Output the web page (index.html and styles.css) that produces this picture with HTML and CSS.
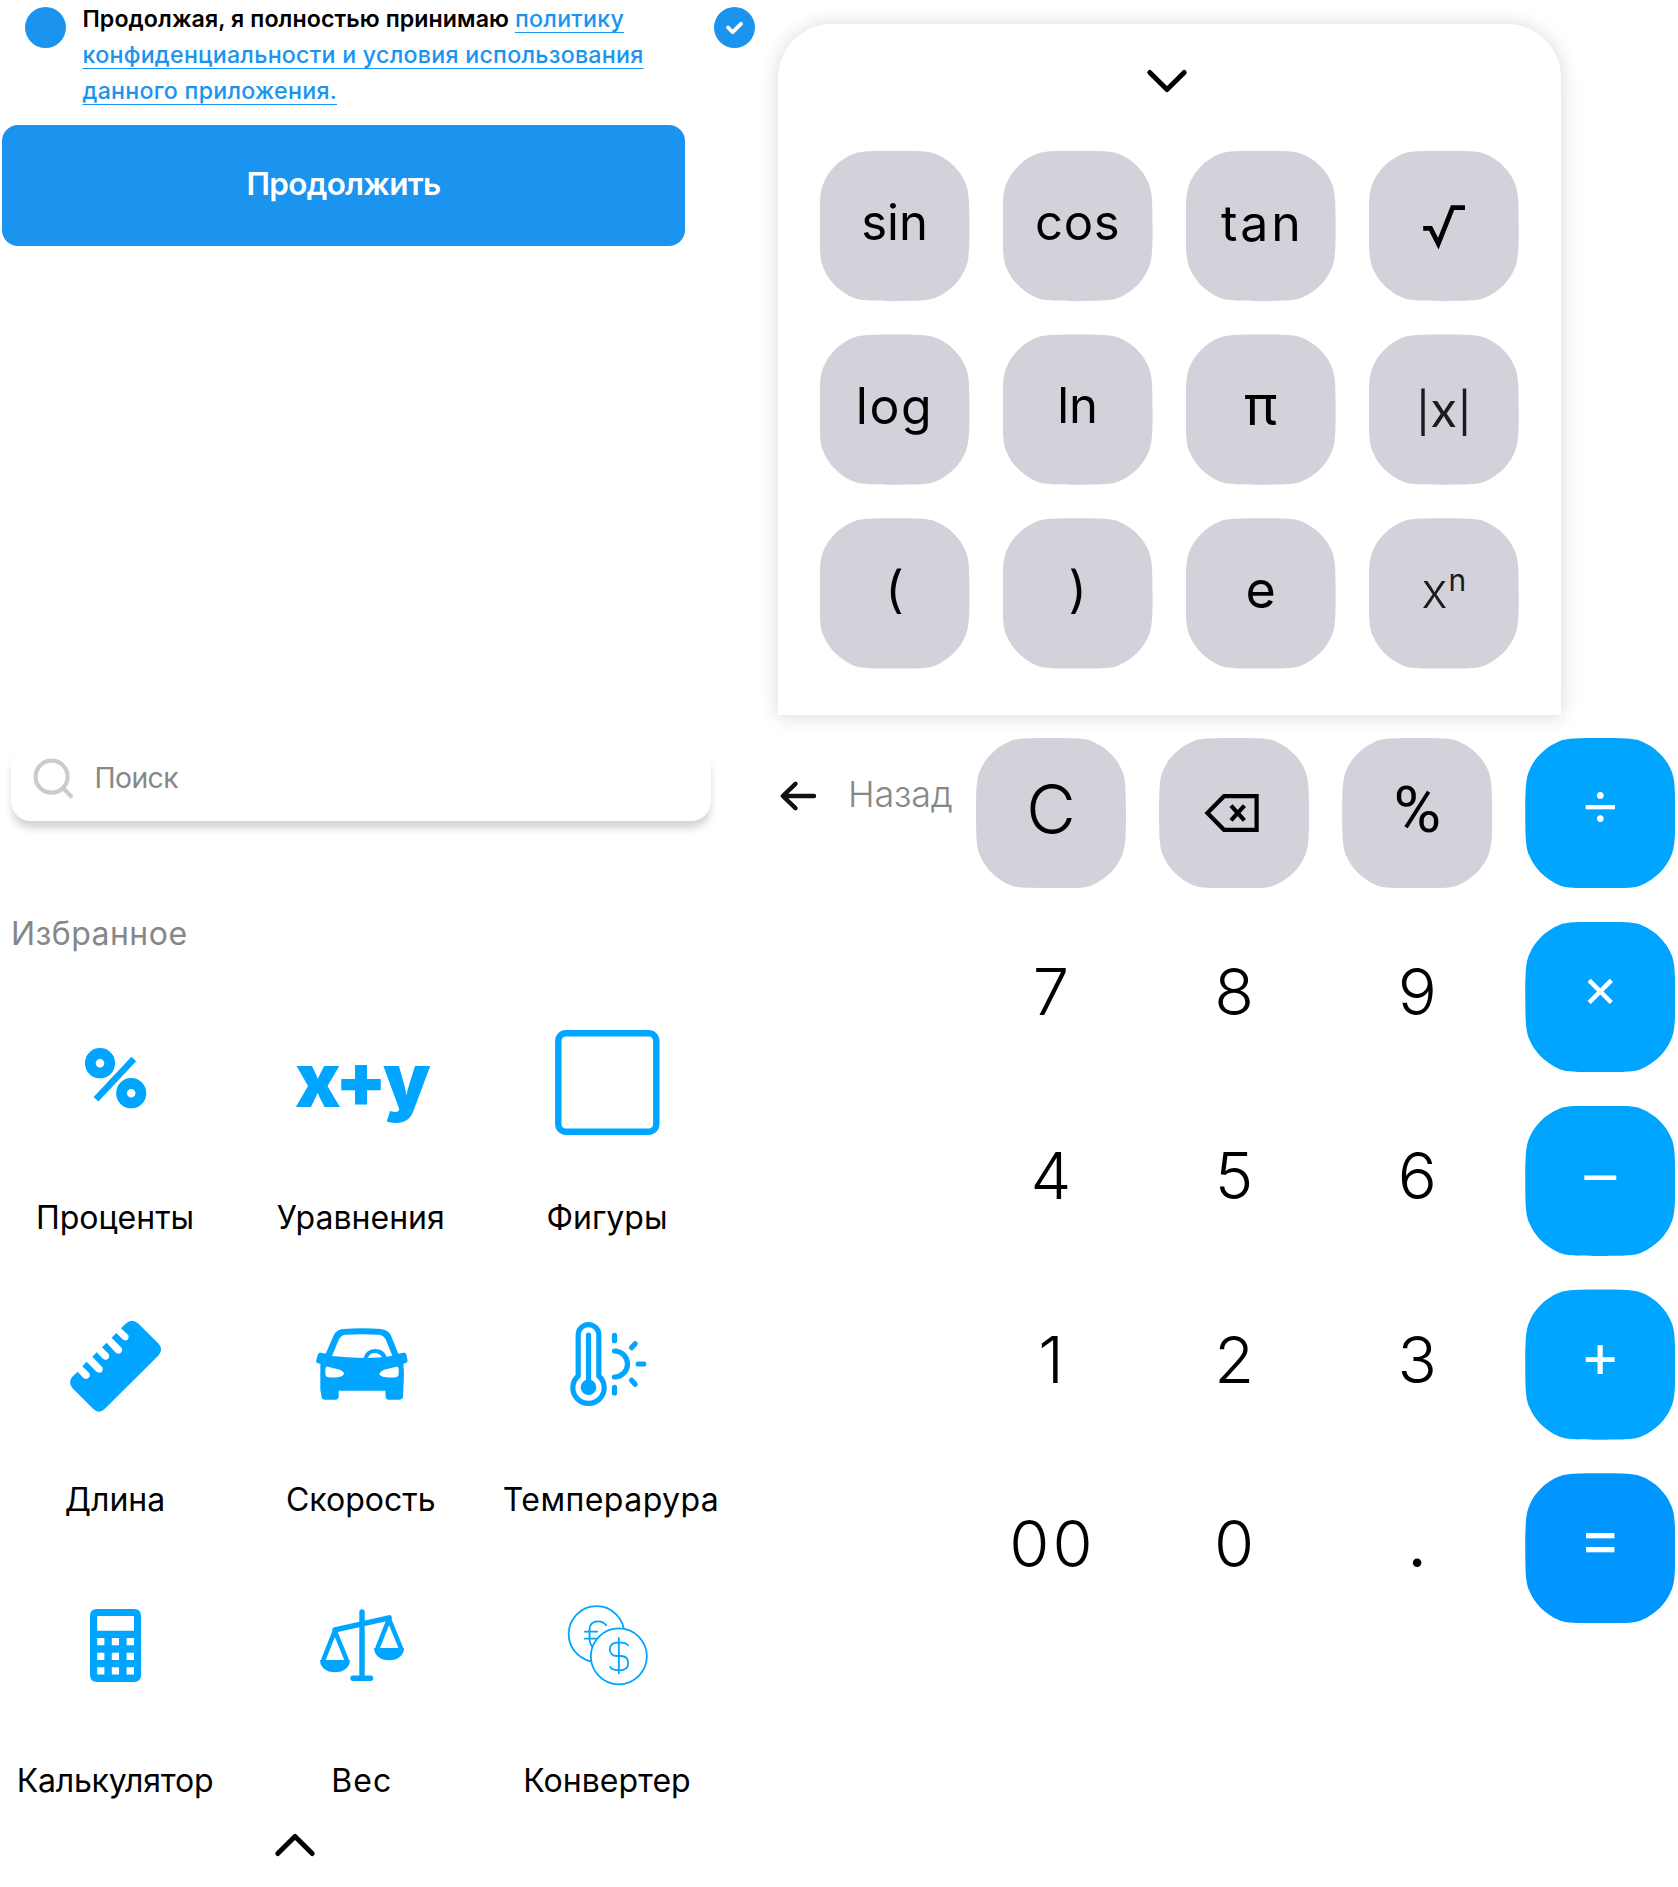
FILE: index.html
```html
<!DOCTYPE html>
<html lang="ru">
<head>
<meta charset="utf-8">
<title>Калькулятор</title>
<link rel="stylesheet" href="styles.css">
</head>
<body>
<main class="board">
  <section class="left">
    <div class="consent">
      <span class="dot"></span>
      <p class="consent-text">Продолжая, я полностью принимаю <a class="link" href="#">политику<br>конфиденциальности и условия использования<br>данного приложения.</a></p>
      <span class="dot dot-checked">
        <svg width="41" height="41" viewBox="0 0 41 41"><path d="M14 20.5l4.7 4.7 8.3-8.4" fill="none" stroke="#fff" stroke-width="3.8" stroke-linecap="round" stroke-linejoin="round"/></svg>
      </span>
    </div>
    <button class="continue">Продолжить</button>

    <div class="search">
      <svg width="48" height="48" viewBox="0 0 48 48" fill="none" stroke="#cbcbcb" stroke-width="4.2" stroke-linecap="round"><circle cx="21.6" cy="22.7" r="16"/><path d="M33.5 34.5l7.5 7.7"/></svg>
      <span>Поиск</span>
    </div>

    <h2 class="heading">Избранное</h2>
    <div class="tiles">
      <div class="tile">
        <svg class="icon" viewBox="0 0 120 120" fill="none" stroke="#00a5ff"><circle cx="45" cy="40.2" r="9.7" stroke-width="10.8"/><circle cx="76.2" cy="70.2" r="9.7" stroke-width="10.8"/><path d="M78.8 36L41 76.2" stroke-width="6.5"/></svg>
        <span class="name">Проценты</span>
      </div>
      <div class="tile">
        <span class="formula">x+y</span>
        <span class="name">Уравнения</span>
      </div>
      <div class="tile">
        <svg class="icon" viewBox="0 0 120 120"><rect x="11.3" y="10.3" width="98" height="98.4" rx="7.5" fill="none" stroke="#00a5ff" stroke-width="6.4"/></svg>
        <span class="name">Фигуры</span>
      </div>

      <div class="tile">
        <svg class="icon" viewBox="0 0 120 120"><path transform="translate(5 6) scale(.33333)" fill="#00a5ff" d="M183 55L196 42Q215 24 234 40L296 101Q310 118 296 136L134 297Q117 313 100 297L37 234Q23 215 37 200L53 185L68 202Q76 210 84 205Q93 199 88 190L67 169L80 155L108 184Q116 191 124 187Q131 180 127 172L97 140L110 127L129 146Q137 152 144 147Q150 141 146 132L126 112L140 98L166 127Q174 134 182 129Q189 122 185 114L155 83L169 69L188 88Q196 94 203 89Q209 82 205 76Z"/></svg>
        <span class="name">Длина</span>
      </div>
      <div class="tile">
        <svg class="icon" viewBox="0 0 120 120"><g transform="translate(-241 6) scale(.33333)" fill="#00a5ff" fill-rule="evenodd"><path d="M797 131L822 74Q830 59 850 57Q907 52 962 57Q984 60 992 74L1015 131L1030 128Q1037 127 1039 134L1043 153Q1043 158 1030 161L1032 190L1029 262Q1028 268 1020 269H984Q977 268 977 262L976 242H836V262Q835 269 828 269H792Q785 268 785 262L781 240V162L770 158Q767 155 769 150L774 133Q777 127 783 128ZM816 138L836 90Q842 76 856 74Q907 71 958 74Q970 76 976 86L997 137L980 140Q972 117 945 117Q917 118 911 144Q860 142 816 138ZM924 144Q928 129 945 129Q960 130 966 142ZM803 170L840 179Q852 184 852 192Q848 200 838 201Q815 204 802 201Q796 200 796 192V176Q797 169 803 170ZM1009 170L972 179Q960 184 958 192Q962 200 974 201Q997 204 1010 201Q1016 200 1016 192V176Q1015 169 1009 170Z"/></g></svg>
        <span class="name">Скорость</span>
      </div>
      <div class="tile">
        <svg class="icon" viewBox="0 0 120 120"><g transform="translate(12.5 6) scale(.33333)" fill="none" stroke="#00a5ff" stroke-width="15.5" stroke-linecap="round"><path d="M56 75A31 31 0 0 1 118 75V198A47 47 0 1 1 56 198Z"/><path d="M87 75V225"/><circle cx="87" cy="232" r="23.5" fill="#00a5ff" stroke="none"/><path d="M165 123A39 39 0 0 1 165 201M165 76V92M216 113L227 101M236 162H253M216 211L227 223M165 232V249"/></g></svg>
        <span class="name name-temp">Темперарура</span>
      </div>

      <div class="tile">
        <svg class="icon" viewBox="0 0 120 120"><path fill="#00a5ff" fill-rule="evenodd" d="M42 24H79Q86 24 86 31V90Q86 97 79 97H42Q35 97 35 90V31Q35 24 42 24ZM42.2 31V45.7H79V31ZM42.2 53V60.3H49.4V53ZM56.8 53V60.3H64V53ZM71.6 53V60.3H79V53ZM42.2 67.7V75H49.4V67.7ZM56.8 67.7V75H64V67.7ZM71.6 67.7V75H79V67.7ZM42.2 82.3V89.6H49.4V82.3ZM56.8 82.3V89.6H64V82.3ZM71.6 82.3V89.6H79V82.3Z"/></svg>
        <span class="name name-tight">Калькулятор</span>
      </div>
      <div class="tile">
        <svg class="icon" viewBox="0 0 120 120" fill="none" stroke="#00a5ff" stroke-width="5.4" stroke-linecap="round" stroke-linejoin="round"><path d="M61 27V93M34 44.8L88.2 32.8M52 93.3H69.6"/><path stroke-width="4.6" d="M22.5 74.5L33.8 46L45.5 74.5M76.7 62.5L88 34L99.7 62.5"/><path fill="#00a5ff" stroke="none" d="M19 74.9H48.9C49 82 43 87.2 34 87.2C25 87.2 19 82 19 74.9ZM73.1 62.9H103C103.1 70 97.1 75.2 88.1 75.2C79.1 75.2 73.1 70 73.1 62.9Z"/></svg>
        <span class="name name-wide">Вес</span>
      </div>
      <div class="tile">
        <svg class="icon" viewBox="0 0 120 120"><g transform="translate(12.5 -275) scale(.33333)" fill="none" stroke="#00a5ff" stroke-width="5.4" stroke-linecap="round"><circle cx="111" cy="972" r="83.5"/><path d="M140 946C132 936 124 934 116 934C98 934 90 945 90 960V985C90 1000 95 1008 104 1016M76 965H113M76 986H113"/><circle cx="178" cy="1039" r="84" fill="#fff"/><path d="M178 984V1090M206 1006C200 998 192 997 178 997C160 997 151 1006 151 1018C151 1031 160 1038 172 1038H184C198 1038 206 1046 206 1059C206 1073 196 1081 180 1081C165 1081 157 1079 152 1071"/></g></svg>
        <span class="name">Конвертер</span>
      </div>
    </div>
    <svg class="chevron-up" width="44" height="28" viewBox="0 0 44 28" fill="none" stroke="#000" stroke-width="5" stroke-linecap="round" stroke-linejoin="round"><path d="M4.8 22.5L22 5.5L39.2 22.5"/></svg>
  </section>

  <section class="right">
    <div class="panel">
      <svg class="chevron-down" width="44" height="28" viewBox="0 0 44 28" fill="none" stroke="#000" stroke-width="5" stroke-linecap="round" stroke-linejoin="round"><path d="M4.8 5.5L22 22.5L39.2 5.5"/></svg>
      <div class="keys">
        <button class="key fn">sin</button>
        <button class="key fn fn-cos">cos</button>
        <button class="key fn fn-tan">tan</button>
        <button class="key"><svg width="50" height="50" viewBox="0 0 50 50" fill="none" stroke="#000" stroke-width="4.8"><path d="M4.2 27.3H11.6L19.3 42.600L33.6 6.700H46"/></svg></button>
        <button class="key fn fn-log">log</button>
        <button class="key fn">ln</button>
        <button class="key fn fn-pi">π</button>
        <button class="key fn fn-abs">|x|</button>
        <button class="key fn fn-paren">(</button>
        <button class="key fn fn-paren">)</button>
        <button class="key fn fn-e">e</button>
        <button class="key fn fn-pow"><span>x<sup>n</sup></span></button>
      </div>
    </div>

    <div class="lower">
      <a class="back" href="#">
        <svg width="40" height="34" viewBox="0 0 40 34" fill="none" stroke="#111" stroke-width="4.4" stroke-linecap="round" stroke-linejoin="round"><path d="M36 17H5M17.5 4.8L4.8 17L17.5 29.2"/></svg>
        <span>Назад</span>
      </a>
      <div class="keys">
        <button class="key num num-c">C</button>
        <button class="key"><svg width="60" height="44" viewBox="0 0 60 44" fill="none" stroke="#000" stroke-width="4.2"><path d="M3.4 22L20 5.2H52.6V38.8H20ZM27 14.6L40.4 29.4M40.4 14.6L27 29.4"/></svg></button>
        <button class="key num num-pct">%</button>
        <button class="key op op-div">÷</button>
        <button class="key num plain">7</button>
        <button class="key num plain">8</button>
        <button class="key num plain">9</button>
        <button class="key op op-mul">×</button>
        <button class="key num plain">4</button>
        <button class="key num plain">5</button>
        <button class="key num plain">6</button>
        <button class="key op op-sub">−</button>
        <button class="key num plain">1</button>
        <button class="key num plain">2</button>
        <button class="key num plain">3</button>
        <button class="key op">+</button>
        <button class="key num plain num-00">00</button>
        <button class="key num plain">0</button>
        <button class="key num plain num-dot">.</button>
        <button class="key op op-eq">=</button>
      </div>
    </div>
  </section>
</main>
</body>
</html>
```
FILE: styles.css
```css
* { box-sizing: border-box; }

body {
  margin: 0;
  background: #fff;
  color: #000;
  font-family: "Inter", "Open Sans", sans-serif;
}

button {
  border: 0;
  padding: 0;
  font-family: inherit;
  color: inherit;
}

.board {
  display: grid;
  grid-template-columns: 778px 1fr;
  width: 1678px;
  height: 1887px;
  overflow: hidden;
}

/* consent */
.consent {
  display: flex;
  align-items: flex-start;
  height: 125.3px;
  padding: 7px 0 0 25px;
}

.dot {
  flex: none;
  width: 41px;
  height: 41px;
  border-radius: 50%;
  background: #1a94ef;
}

.dot svg { display: block; }

.consent-text {
  flex: none;
  width: 631px;
  margin: -6px 0 0 16.5px;
  font-size: 23.2px;
  font-weight: 600;
  line-height: 36px;
  letter-spacing: .07px;
  white-space: nowrap;
}

.link {
  color: #1a94ef;
  font-weight: 500;
  letter-spacing: .27px;
  text-decoration: underline;
  text-decoration-thickness: 1.4px;
  text-underline-offset: 5px;
  text-decoration-skip-ink: none;
}

.continue {
  display: block;
  width: 683px;
  height: 121px;
  margin-left: 2px;
  padding-bottom: 4px;
  border-radius: 16px;
  background: #1a94ef;
  color: #fff;
  font-size: 31.5px;
  font-weight: 600;
  line-height: 40px;
  letter-spacing: -.7px;
}

/* search */
.search {
  display: flex;
  align-items: center;
  width: 700px;
  height: 75px;
  margin: 500px 0 0 11px;
  padding: 0 0 11px 19px;
  border-radius: 20px;
  background: #fff;
  box-shadow: 0 8px 8px -1px rgba(0, 0, 0, .18);
  color: #878787;
  font-size: 28.4px;
  font-weight: 400;
  letter-spacing: -.6px;
}

.search span { margin-left: 16.5px; padding-bottom: 1px; }

.heading {
  margin: 92.7px 0 0 11px;
  color: #878787;
  font-size: 32px;
  font-weight: 400;
  line-height: 40px;
  letter-spacing: .45px;
}

/* favourites */
.tiles {
  display: grid;
  grid-template-columns: 230px 261.5px 231px;
  grid-auto-rows: 281.1px;
  margin-top: 69.3px;
}

.tile {
  display: flex;
  flex-direction: column;
  align-items: center;
}

.icon {
  flex: none;
  width: 120px;
  height: 120px;
}

.formula {
  height: 120px;
  color: #00a5ff;
  font-size: 75px;
  font-weight: 900;
  line-height: 114px;
  letter-spacing: -4px;
}

.name {
  margin-top: 55.2px;
  font-size: 32px;
  font-weight: 400;
  line-height: 40px;
}

.name-tight { letter-spacing: -.2px; }
.name-wide { padding-left: 2px; letter-spacing: 1px; }
.name-temp { padding-left: 8px; letter-spacing: .45px; }

.chevron-up {
  display: block;
  margin: -36px 0 0 273.3px;
}

/* function panel */
.panel {
  width: 783px;
  height: 691.3px;
  margin-top: 23.7px;
  padding: 43.3px 0 0 41.5px;
  border-radius: 54px 54px 0 0;
  background: #fff;
  box-shadow: 0 1px 20px rgba(0, 0, 0, .16);
}

.chevron-down {
  display: block;
  margin: 0 0 55.7px 325.5px;
}

.keys {
  display: grid;
  grid-template-columns: repeat(4, 150px);
  grid-auto-rows: 150.3px;
  gap: 33.5px 33.1px;
}

.key {
  display: flex;
  align-items: center;
  justify-content: center;
  background: #d2d2db;
  clip-path: path("M75 0C105 0 110 .8 116.500 3.400C130 9 141 20 146 32.500C149.200 40 150 48 150 75C150 102 149.200 110 146 117.500C141 130 130 141 116.500 146.900C110 149.500 105 150.300 75 150.300C45 150.300 40 149.500 33.500 146.900C20 141 9 130 4 117.500C.8 110 0 102 0 75C0 48 .8 40 4 32.500C9 20 20 9 33.500 3.400C40 .8 45 0 75 0Z");
}

.fn {
  padding-bottom: 6.5px;
  font-size: 49px;
  font-weight: 400;
  line-height: 60px;
}

.fn-cos { letter-spacing: .6px; }
.fn-tan { padding-left: 3px; font-size: 50px; letter-spacing: 2.8px; }
.fn-log { font-size: 50px; letter-spacing: 1.5px; }
.fn-pi { font-size: 55px; padding-bottom: 10px; }

.fn-abs {
  padding: 0 0 3px 2px;
  color: #1c1c1e;
  font-family: "Lato", sans-serif;
  font-size: 50px;
  letter-spacing: 2px;
}

.fn-paren { padding-bottom: 9px; font-size: 50px; }
.fn-e { padding-bottom: 7px; font-size: 52px; }
.fn-pow { padding-bottom: 5px; color: #1c1c1e; font-weight: 300; }

.fn-pow sup {
  margin-left: 1px;
  font-size: 30px;
  font-weight: 400;
  line-height: 0;
  vertical-align: 17px;
}

/* keypad */
.lower {
  display: grid;
  grid-template-columns: 198px 1fr;
  margin-top: 23px;
}

.back {
  display: flex;
  align-items: center;
  height: 116px;
  color: #878787;
  font-size: 36px;
  font-weight: 300;
  letter-spacing: -.2px;
  text-decoration: none;
}

.back span { margin: -3px 0 0 30px; }

.num {
  padding-bottom: 9px;
  font-size: 65px;
  font-weight: 300;
  line-height: 80px;
}

.num-c { padding-bottom: 9px; font-size: 68px; }
.num-pct { padding-bottom: 6px; font-family: "Roboto", sans-serif; font-weight: 400; }
.num-00 { padding-left: 3px; letter-spacing: 3px; }
.num-dot { font-weight: 400; }
.plain { background: none; }

.op {
  padding-bottom: 20px;
  background: #00a5ff;
  color: #fff;
  font-size: 61px;
  font-weight: 400;
  line-height: 80px;
}

.op-div { padding-bottom: 22px; font-size: 66px; font-weight: 300; }
.op-mul { font-size: 55px; }
.op-sub { padding-bottom: 18px; font-size: 72px; font-weight: 300; }
.op-eq { background: #0096ff; font-size: 64px; }
```
